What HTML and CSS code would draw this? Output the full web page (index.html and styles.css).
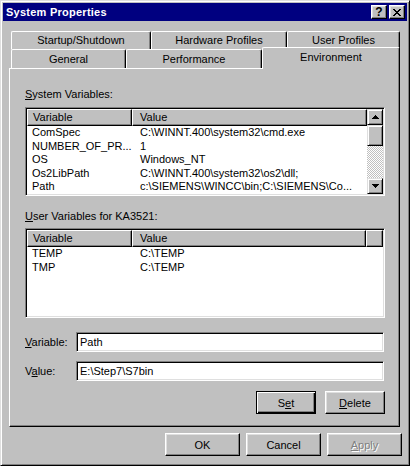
FILE: index.html
```html
<!DOCTYPE html>
<html>
<head>
<meta charset="utf-8">
<title>System Properties</title>
<link rel="stylesheet" href="styles.css">
</head>
<body>
<div class="window">
  <div class="titlebar">
    <span class="title">System Properties</span>
    <div class="caption-btns">
      <div class="cbtn help">?</div>
      <div class="cbtn close">
        <svg width="8" height="7" viewBox="0 0 8 7" shape-rendering="crispEdges"><path d="M0 0h2v1h1v1h2V1h1V0h2v1H7v1H6v1H5v1h1v1h1v1h1v1H6V6H5V5H3v1H2v1H0V6h1V5h1V4h1V3H2V2H1V1H0z" fill="#000"/></svg>
      </div>
    </div>
  </div>
  <div class="client">
    <div class="tabs">
      <div class="tabrow back">
        <div class="tab t-startup">Startup/Shutdown</div>
        <div class="tab t-hw">Hardware Profiles</div>
        <div class="tab t-user">User Profiles</div>
      </div>
      <div class="tabrow front">
        <div class="tab t-general">General</div>
        <div class="tab t-perf">Performance</div>
        <div class="tab t-env selected">Environment</div>
      </div>
    </div>
    <div class="panel">
      <div class="label"><u>S</u>ystem Variables:</div>
      <div class="listview sys">
        <div class="lv-main">
          <div class="lv-header">
            <div class="hcol c1">Variable</div>
            <div class="hcol c2 sys-c2">Value</div>
          </div>
          <div class="lv-row"><span class="cell c1">ComSpec</span><span class="cell c2">C:\WINNT.400\system32\cmd.exe</span></div>
          <div class="lv-row"><span class="cell c1">NUMBER_OF_PR...</span><span class="cell c2">1</span></div>
          <div class="lv-row"><span class="cell c1">OS</span><span class="cell c2">Windows_NT</span></div>
          <div class="lv-row"><span class="cell c1">Os2LibPath</span><span class="cell c2">C:\WINNT.400\system32\os2\dll;</span></div>
          <div class="lv-row"><span class="cell c1">Path</span><span class="cell c2">c:\SIEMENS\WINCC\bin;C:\SIEMENS\Co...</span></div>
        </div>
        <div class="vscroll">
          <div class="sbtn"><svg width="7" height="4" viewBox="0 0 7 4" shape-rendering="crispEdges"><path d="M3 0h1v1h1v1h1v1h1v1H0V3h1V2h1V1h1z" fill="#000"/></svg></div>
          <div class="thumb"></div>
          <div class="track"></div>
          <div class="sbtn"><svg width="7" height="4" viewBox="0 0 7 4" shape-rendering="crispEdges"><path d="M0 0h7v1H6v1H5v1H4v1H3V3H2V2H1V1H0z" fill="#000"/></svg></div>
        </div>
      </div>

      <div class="label label2"><u>U</u>ser Variables for KA3521:</div>
      <div class="listview user">
        <div class="lv-main">
          <div class="lv-header">
            <div class="hcol c1">Variable</div>
            <div class="hcol c2 user-c2">Value</div>
            <div class="hcol filler"></div>
          </div>
          <div class="lv-row"><span class="cell c1">TEMP</span><span class="cell c2">C:\TEMP</span></div>
          <div class="lv-row"><span class="cell c1">TMP</span><span class="cell c2">C:\TEMP</span></div>
        </div>
      </div>

      <div class="field-row first">
        <span class="field-label"><u>V</u>ariable:</span>
        <div class="textbox">Path</div>
      </div>
      <div class="field-row">
        <span class="field-label">V<u>a</u>lue:</span>
        <div class="textbox">E:\Step7\S7bin</div>
      </div>

      <div class="panel-buttons">
        <div class="btn small default">S<u>e</u>t</div>
        <div class="btn small"><u>D</u>elete</div>
      </div>
    </div>
    <div class="dialog-buttons">
      <div class="btn">OK</div>
      <div class="btn">Cancel</div>
      <div class="btn disabled"><u>A</u>pply</div>
    </div>
  </div>
</div>
</body>
</html>
```

FILE: styles.css
```css
* { box-sizing: border-box; }
html, body { margin: 0; padding: 0; }
body {
  width: 410px;
  height: 466px;
  overflow: hidden;
  background: #c0c0c0;
  font-family: "Liberation Sans", Arial, sans-serif;
  font-size: 11px;
  color: #000;
}
u { text-decoration: underline; text-underline-offset: 1px; }

.window {
  width: 410px;
  height: 466px;
  border: 1px solid;
  border-color: #dfdfdf #000 #000 #dfdfdf;
  box-shadow: inset 1px 1px #fff, inset -1px -1px #808080;
  padding: 2px;
  background: #c0c0c0;
  display: flex;
  flex-direction: column;
}

/* title bar */
.titlebar {
  flex: none;
  height: 18px;
  background: #000080;
  display: flex;
  align-items: center;
  justify-content: space-between;
  padding: 0 2px 0 3px;
}
.title {
  color: #fff;
  font-weight: bold;
  font-size: 11px;
  line-height: 13px;
  letter-spacing: 0.25px;
}
.caption-btns { display: flex; gap: 2px; }
.cbtn {
  width: 16px;
  height: 14px;
  background: #c0c0c0;
  border: 1px solid;
  border-color: #fff #000 #000 #fff;
  box-shadow: inset -1px -1px #808080, inset 1px 1px #dfdfdf;
  display: flex;
  align-items: center;
  justify-content: center;
  font-weight: bold;
  font-size: 12px;
  line-height: 11px;
}

/* client */
.client {
  flex: 1;
  display: flex;
  flex-direction: column;
  padding: 10px 5px 0 6px;
}

/* tabs */
.tabs { margin-left: 2px; }
.tabrow { display: flex; height: 18px; }
.tabrow.front { height: 19px; }
.tab {
  flex: none;
  background: #c0c0c0;
  border-top: 1px solid #fff;
  border-left: 1px solid #fff;
  border-right: 1px solid #000;
  box-shadow: inset -1px 0 #808080;
  border-radius: 2px 2px 0 0;
  display: flex;
  align-items: center;
  justify-content: center;
  line-height: 13px;
}
.t-startup { width: 140px; }
.t-hw { width: 136px; }
.t-user { width: 113px; }
.t-general { width: 115px; }
.t-perf { width: 136px; }
.t-env { width: 138px; }
.tab.selected {
  position: relative;
  z-index: 2;
  height: 22px;
  margin-top: -2px;
  padding-bottom: 3px;
}

/* panel */
.panel {
  flex: none;
  width: 391px;
  height: 359px;
  border: 1px solid;
  border-color: #fff #000 #000 #fff;
  box-shadow: inset -1px -1px #808080;
  padding: 19px 14px 0 15px;
  display: flex;
  flex-direction: column;
}
.label { height: 13px; line-height: 13px; }
.label2 { margin-top: 14px; }

.listview {
  width: 360px;
  background: #fff;
  border: 1px solid;
  border-color: #808080 #fff #fff #808080;
  box-shadow: inset 1px 1px #000, inset -1px -1px #dfdfdf;
  padding: 1px;
  display: flex;
}
.listview.sys { margin-top: 6px; height: 89px; }
.listview.user { margin-top: 5px; height: 90px; }
.lv-main { flex: 1; min-width: 0; }
.lv-header { display: flex; height: 17px; }
.hcol {
  flex: none;
  background: #c0c0c0;
  border: 1px solid;
  border-color: #fff #000 #000 #fff;
  box-shadow: inset -1px -1px #808080;
  line-height: 14px;
}
.hcol.c1 { width: 105px; padding-left: 5px; }
.hcol.c2 { padding-left: 7px; }
.sys-c2 { width: 235px; }
.user-c2 { width: 234px; }
.hcol.filler { flex: 1; }

.lv-row { display: flex; height: 13.5px; line-height: 13.5px; white-space: nowrap; }
.cell.c1 { width: 105px; padding-left: 5px; overflow: hidden; }
.cell.c2 { padding-left: 8px; }

/* scrollbar */
.vscroll {
  flex: none;
  width: 16px;
  display: flex;
  flex-direction: column;
}
.sbtn, .thumb {
  flex: none;
  background: #c0c0c0;
  border: 1px solid;
  border-color: #dfdfdf #000 #000 #dfdfdf;
  box-shadow: inset 1px 1px #fff, inset -1px -1px #808080;
}
.sbtn {
  height: 16px;
  display: flex;
  align-items: center;
  justify-content: center;
}
.thumb { height: 21px; }
.track {
  flex: 1;
  background: repeating-conic-gradient(#c0c0c0 0 25%, #fff 0 50%) 0 0 / 2px 2px;
}

/* fields */
.field-row { display: flex; align-items: center; height: 20px; margin-top: 9px; }
.field-row.first { margin-top: 14px; }
.field-label { width: 51px; flex: none; }
.textbox {
  width: 308px;
  height: 20px;
  background: #fff;
  border: 1px solid;
  border-color: #808080 #fff #fff #808080;
  box-shadow: inset 1px 1px #000, inset -1px -1px #dfdfdf;
  padding: 0 3px;
  line-height: 18px;
}

/* buttons */
.btn {
  flex: none;
  width: 75px;
  height: 23px;
  background: #c0c0c0;
  border: 1px solid;
  border-color: #fff #000 #000 #fff;
  box-shadow: inset -1px -1px #808080, inset 1px 1px #dfdfdf;
  display: flex;
  align-items: center;
  justify-content: center;
}
.btn.small { width: 60px; }
.btn.default {
  border-color: #000;
  box-shadow: inset 1px 1px #fff, inset -1px -1px #000, inset -2px -2px #808080;
}
.btn.disabled { color: #808080; text-shadow: 1px 1px #fff; }

.panel-buttons {
  display: flex;
  justify-content: flex-end;
  gap: 9px;
  margin-top: 10px;
}
.dialog-buttons {
  display: flex;
  justify-content: flex-end;
  gap: 6px;
  margin-top: 6px;
}
```
